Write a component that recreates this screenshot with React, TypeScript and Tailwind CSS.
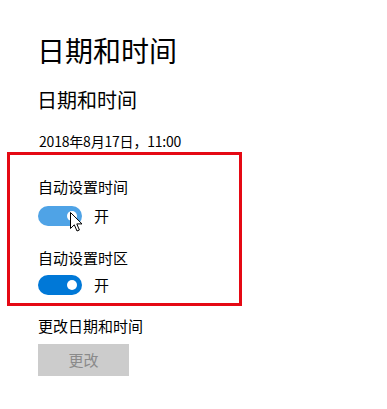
import React from 'react';

const FONT = "font-['Microsoft_YaHei','Noto_Sans_CJK_SC','Noto_Sans',sans-serif]";

interface ToggleProps {
    color: string;
    hovered?: boolean;
}

const Toggle: React.FC<ToggleProps> = ({ color, hovered }) => (
    <div className="flex items-center h-5">
        <div className={`relative w-[44px] h-5 rounded-full flex items-center justify-end pr-[5px] ${color}`}>
            <div className="w-[10px] h-[10px] rounded-full bg-white" />
            {hovered && (
                <svg
                    className="absolute left-[32px] top-[6px]"
                    width="13"
                    height="20"
                    viewBox="0 0 13 20"
                >
                    <path
                        d="M0.5 0.5 L0.5 16.5 L4.3 12.8 L7 19 L9.4 18 L6.8 11.9 L12 11.9 Z"
                        fill="#fff"
                        stroke="#000"
                        strokeWidth="1"
                        strokeLinejoin="miter"
                    />
                </svg>
            )}
        </div>
        <span className="ml-3 text-[15px] leading-5 text-black">开</span>
    </div>
);

export default function App() {
    return (
        <div className={`w-[387px] h-[409px] overflow-hidden bg-white text-black ${FONT}`}>
            <div className="pl-[37px] pt-[34px]">
                <h1 className="text-[28px] leading-[32px] h-[32px] font-normal">日期和时间</h1>
                <h2 className="mt-[22px] text-[20px] leading-6 h-6 font-normal">日期和时间</h2>
                <div className="mt-[19px] pl-[2px] text-[14px] tracking-[-0.2px] leading-5 h-5">2018年8月17日，11:00</div>
            </div>

            <div className="mt-px ml-[7px] w-[235px] border-[3px] border-[#e50914] pl-[28px] pt-[22px] pb-[8px]">
                <div className="text-[15px] leading-5 h-5">自动设置时间</div>
                <div className="mt-[9px]">
                    <Toggle color="bg-[#4fa3e6]" hovered />
                </div>
                <div className="mt-[22px] text-[15px] leading-5 h-5">自动设置时区</div>
                <div className="mt-[7px]">
                    <Toggle color="bg-[#0078d7]" />
                </div>
            </div>

            <div className="pl-[38px]">
                <div className="mt-[10px] text-[15px] leading-5 h-5">更改日期和时间</div>
                <button
                    disabled
                    className="mt-2 w-[91px] h-8 bg-[#cccccc] text-[15px] text-[#8a8a8a] flex items-center justify-center"
                >
                    更改
                </button>
                <div className="mt-[29px] pl-[2px] text-[14px] leading-5 h-5">时区</div>
            </div>
        </div>
    );
}
